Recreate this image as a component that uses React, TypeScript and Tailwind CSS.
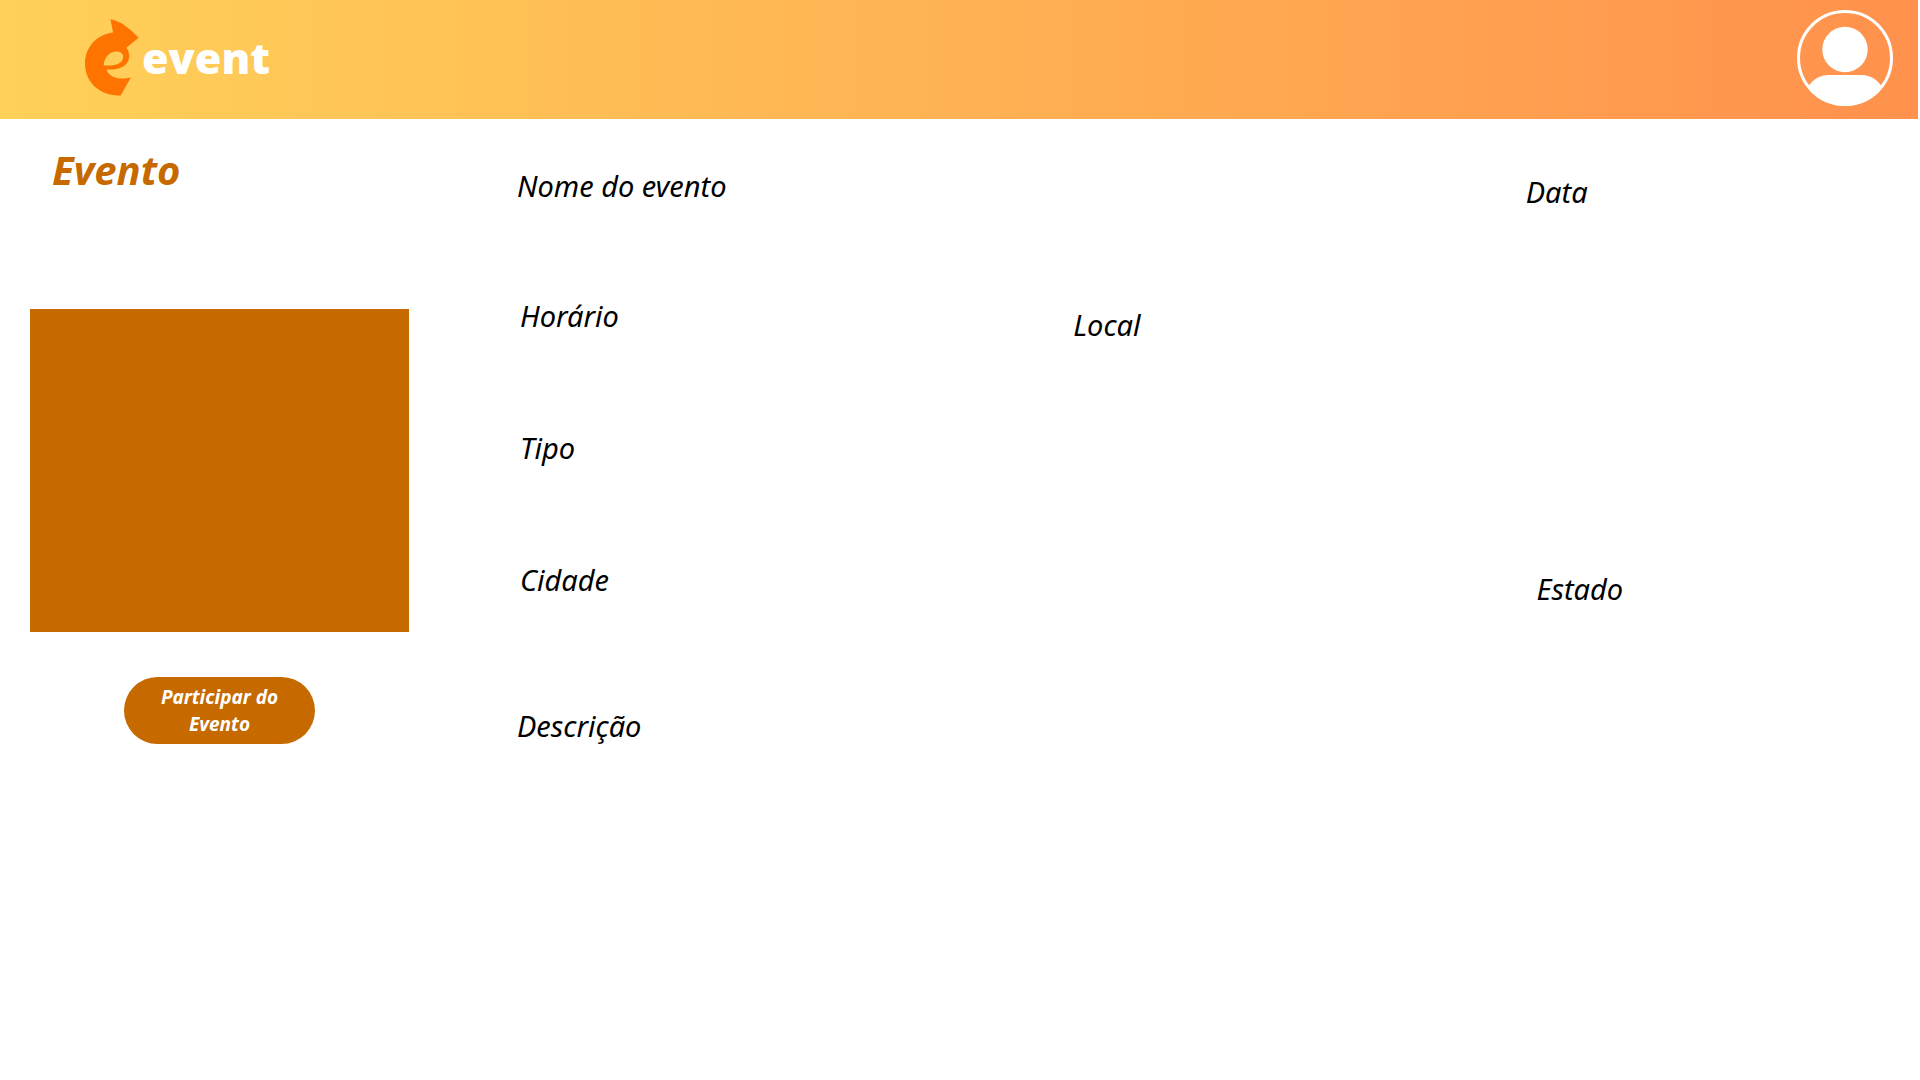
import type { ReactNode } from "react";

function LogoMark() {
  return (
    <svg viewBox="0 0 162 230" className="h-[77px] w-[54px]" aria-hidden="true">
      <path
        fill="#ff7300"
        fillRule="evenodd"
        d="M76 0 C109 5 136 30 161 56 L124 86 C135 98 136 122 123 135 C110 149 86 152 64 151 C74 177 106 184 138 174 L107 229 C45 232 0 189 0 134 C0 85 34 46 84 40 C82 25 79 13 76 0 Z M56 139 C57 114 75 96 96 97 C112 98 119 110 112 123 C104 137 82 140 56 139 Z"
      />
    </svg>
  );
}

function Avatar() {
  return (
    <svg viewBox="0 0 96 96" className="size-24" aria-hidden="true">
      <defs>
        <clipPath id="avatar-disc">
          <circle cx="48" cy="48" r="48" />
        </clipPath>
      </defs>
      <circle cx="48" cy="48" r="46.5" fill="none" stroke="#fff" strokeWidth="3" />
      <circle cx="48" cy="39.5" r="22.7" fill="#fff" />
      <path
        clipPath="url(#avatar-disc)"
        fill="#fff"
        d="M11 77 C16 69 23 65 32 65 H64 C73 65 80 69 85 77 L80 96 H16 Z"
      />
    </svg>
  );
}

function Row({ children }: { children: ReactNode }) {
  return <div className="grid h-12 grid-cols-[554fr_454fr_394fr]">{children}</div>;
}

export default function App() {
  return (
    <div className="min-h-screen bg-white font-['Noto_Sans',sans-serif] text-black">
      <header className="mr-0.5 flex h-[119px] items-center justify-between bg-linear-to-r from-[#ffd159] to-[#ff914d] pr-[25px] pb-1 pl-[85px]">
        <a href="#" className="flex items-center gap-[3px]">
          <LogoMark />
          <span className="font-['Open_Sans',sans-serif] text-[43px] leading-[54px] font-extrabold text-white">
            event
          </span>
        </a>
        <button type="button" aria-label="Perfil">
          <Avatar />
        </button>
      </header>

      <main className="flex">
        <aside className="flex w-[409px] shrink-0 flex-col pt-6 pl-[30px]">
          <h1 className="pl-[22px] text-[40px] leading-[54px] font-bold text-[#c66a00] italic">
            Evento
          </h1>
          <div className="mt-28 h-[323px] bg-[#c66a00]" />
          <button
            type="button"
            className="mt-[45px] h-[67px] w-[191px] self-center rounded-full bg-[#c66a00] px-8 text-[19px] leading-[27px] font-bold text-white italic"
          >
            Participar do Evento
          </button>
        </aside>

        <section className="grow pt-[47px] pl-[108px] text-[29px] leading-[40px] italic">
          <Row>
            <h2>Nome do evento</h2>
            <h2 className="col-start-3 pt-1.5">Data</h2>
          </Row>
          <div className="flex flex-col gap-[84px] pt-[82px] pl-[3px]">
            <Row>
              <h2>Horário</h2>
              <h2 className="pt-[9px]">Local</h2>
            </Row>
            <Row>
              <h2>Tipo</h2>
            </Row>
            <Row>
              <h2>Cidade</h2>
              <h2 className="col-start-3 pt-[9px] pl-2.5">Estado</h2>
            </Row>
          </div>
          <h2 className="pt-[98px]">Descrição</h2>
        </section>
      </main>
    </div>
  );
}
